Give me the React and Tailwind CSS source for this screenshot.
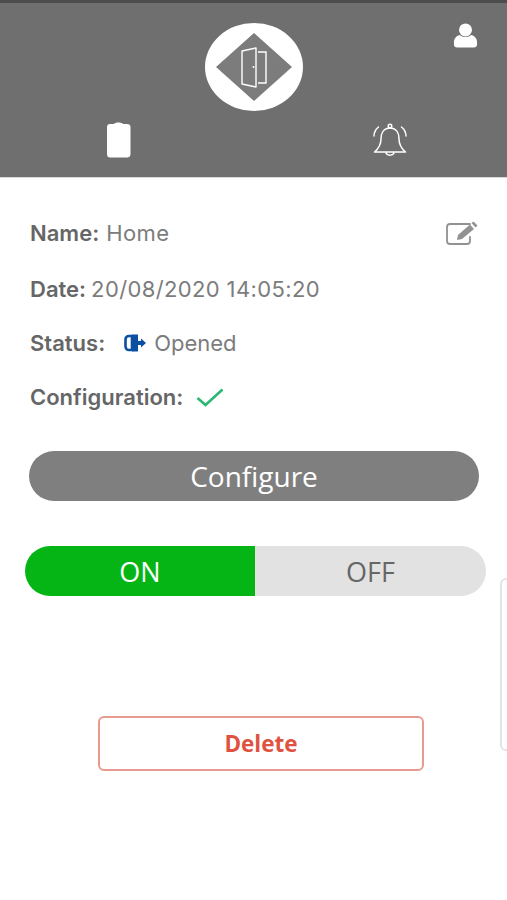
const labelFont = "font-['Inter','Noto_Sans',sans-serif]";

function DoorLogo() {
  return (
    <div className="flex h-[88px] w-[98px] items-center justify-center rounded-[50%] bg-white">
      <svg width="78" height="70" viewBox="0 0 78 70" fill="none">
        <polygon points="39,1 77,35 39,69 1,35" fill="#7c7c7c" />
        <path d="M27 19 L41 16 V55 L27 52 Z" stroke="#fff" strokeWidth="1.4" strokeLinejoin="round" />
        <path d="M43 20 H51 V51 H43" stroke="#fff" strokeWidth="1.4" />
        <circle cx="38.500" cy="35" r="1" fill="#fff" />
      </svg>
    </div>
  );
}

function BellIcon() {
  return (
    <svg width="34" height="34" viewBox="0 0 34 34" fill="none" stroke="#fff" strokeWidth="1.5" strokeLinecap="round" strokeLinejoin="round">
      <circle cx="17" cy="3" r="1.8" />
      <path d="M17 5 C10 5 8 11 8 16 C8 22 5 26 1.5 29 H32.5 C29 26 26 22 26 16 C26 11 24 5 17 5 Z" />
      <path d="M13 29.5 C13.5 33 20.5 33 21 29.5" />
      <path d="M5.5 4 C2.5 6.5 1 9.5 1 13" />
      <path d="M28.5 4 C31.5 6.5 33 9.5 33 13" />
    </svg>
  );
}

function EditIcon() {
  return (
    <svg width="32" height="24" viewBox="0 0 32 24" fill="none">
      <path d="M24 3 H4 C2 3 1 4 1 6 V20 C1 22 2 23 4 23 H21 C23 23 24 22 24 20 V16" stroke="#929292" strokeWidth="1.8" strokeLinecap="round" />
      <path d="M11 19 L12 14 L24 3.5 L28 8 L16 18 Z" fill="#929292" />
      <path d="M25.5 2 L27.5 0.5 L31.5 4.5 L29.5 6.5 Z" fill="#929292" />
    </svg>
  );
}

function DoorStatusIcon() {
  return (
    <svg width="22" height="18" viewBox="0 0 22 18" fill="none">
      <path d="M8 2 H5 C3 2 1.500 3.500 1.500 5.500 V12.500 C1.500 14.500 3 16 5 16 H8 Z" stroke="#0b4fa0" strokeWidth="2.6" />
      <path d="M8 0.500 H14 V17.500 H8 Z" fill="#0b4fa0" />
      <path d="M14 7 H17 V4.500 L22 9 L17 13.500 V11 H14 Z" fill="#0b4fa0" />
    </svg>
  );
}

function InfoRow({ label, className, children }) {
  return (
    <div className={`flex items-center text-[22px] leading-[28px] text-[#7c7c7c] ${className}`}>
      <span className="font-semibold text-[#666]">{label}</span>
      {children}
    </div>
  );
}

export default function App() {
  return (
    <div className="relative h-[900px] w-[507px] overflow-hidden bg-white">
      {/* Top header with device logo and status icons */}
      <header className="relative h-[178px] border-t-[3px] border-b border-t-[#4c4c4c] border-b-[#d9d9d9] bg-[#6f6f6f] pt-[20px]">
        <div className="flex justify-center">
          <DoorLogo />
        </div>
        <div className="absolute right-[29px] top-[20px]">
          <svg width="25" height="25" viewBox="0 0 26 27" fill="#fff">
            <ellipse cx="13" cy="7.5" rx="7" ry="7" />
            <path d="M0.5 21 C0.5 16 4 13.5 7 13 C10 16 16 16 19 13 C22 13.5 25.5 16 25.5 21 V23 C25.5 25.5 24 26.5 22 26.5 H4 C2 26.5 0.5 25.5 0.5 23 Z" />
          </svg>
        </div>
        <div className="mt-[10px] flex items-center pl-[106px]">
          <svg width="25" height="37" viewBox="0 0 25 37" fill="#fff">
            <path d="M1 6 C1 4 2 3 4 3 H8 C9 1 16 1 17 3 H21 C23 3 24.500 4 24.500 6 V33 C24.500 35.500 23 36.500 21 36.500 H4 C2 36.500 1 35.500 1 33 Z" />
          </svg>
          <div className="ml-[242px]">
            <BellIcon />
          </div>
        </div>
      </header>

      {/* Device details */}
      <section className={`px-[30px] pt-[41px] ${labelFont}`}>
        <div className="-mr-[1px] flex items-center justify-between">
          <InfoRow label="Name:">
            <span className="ml-[7px] tracking-[0.4px]">Home</span>
          </InfoRow>
          <EditIcon />
        </div>
        <InfoRow label="Date:" className="mt-[28px]">
          <span className="ml-[5px] tracking-[0.37px]">20/08/2020 14:05:20</span>
        </InfoRow>
        <InfoRow label="Status:" className="mt-[26px]">
          <span className="ml-[19px] flex items-center">
            <DoorStatusIcon />
          </span>
          <span className="ml-[8px]">Opened</span>
        </InfoRow>
        <InfoRow label="Configuration:" className="mt-[26px]">
          <svg className="ml-[13px]" width="28" height="19" viewBox="0 0 28 19" fill="none">
            <path d="M1.500 10 L9.500 17 L26.500 1.500" stroke="#2bb673" strokeWidth="2.6" />
          </svg>
        </InfoRow>
      </section>

      {/* Actions */}
      <section className="font-['Open_Sans',sans-serif]">
        <button className="ml-[29px] mt-[40px] block h-[50px] w-[450px] rounded-full bg-[#7f7f7f] text-[28px] leading-none text-white">
          Configure
        </button>
        <div className="ml-[25px] mt-[45px] flex h-[50px] w-[461px] text-[27px] leading-none">
          <div className="flex w-[230px] items-center justify-center rounded-l-full bg-[#05b516] text-white">ON</div>
          <div className="flex flex-1 items-center justify-center rounded-r-full bg-[#e2e2e2] text-[#666]">OFF</div>
        </div>
        <button className="ml-[98px] mt-[120px] block h-[55px] w-[326px] rounded-[6px] border-2 border-[#e79b90] bg-white pt-[2px] text-[22.5px] font-bold leading-none text-[#e0523f]">
          Delete
        </button>
      </section>

      {/* Edge of a side panel peeking in */}
      <div className="absolute left-[500px] top-[578px] h-[173px] w-[20px] rounded-l-[6px] border-2 border-[#e4e4e4]" />
    </div>
  );
}
